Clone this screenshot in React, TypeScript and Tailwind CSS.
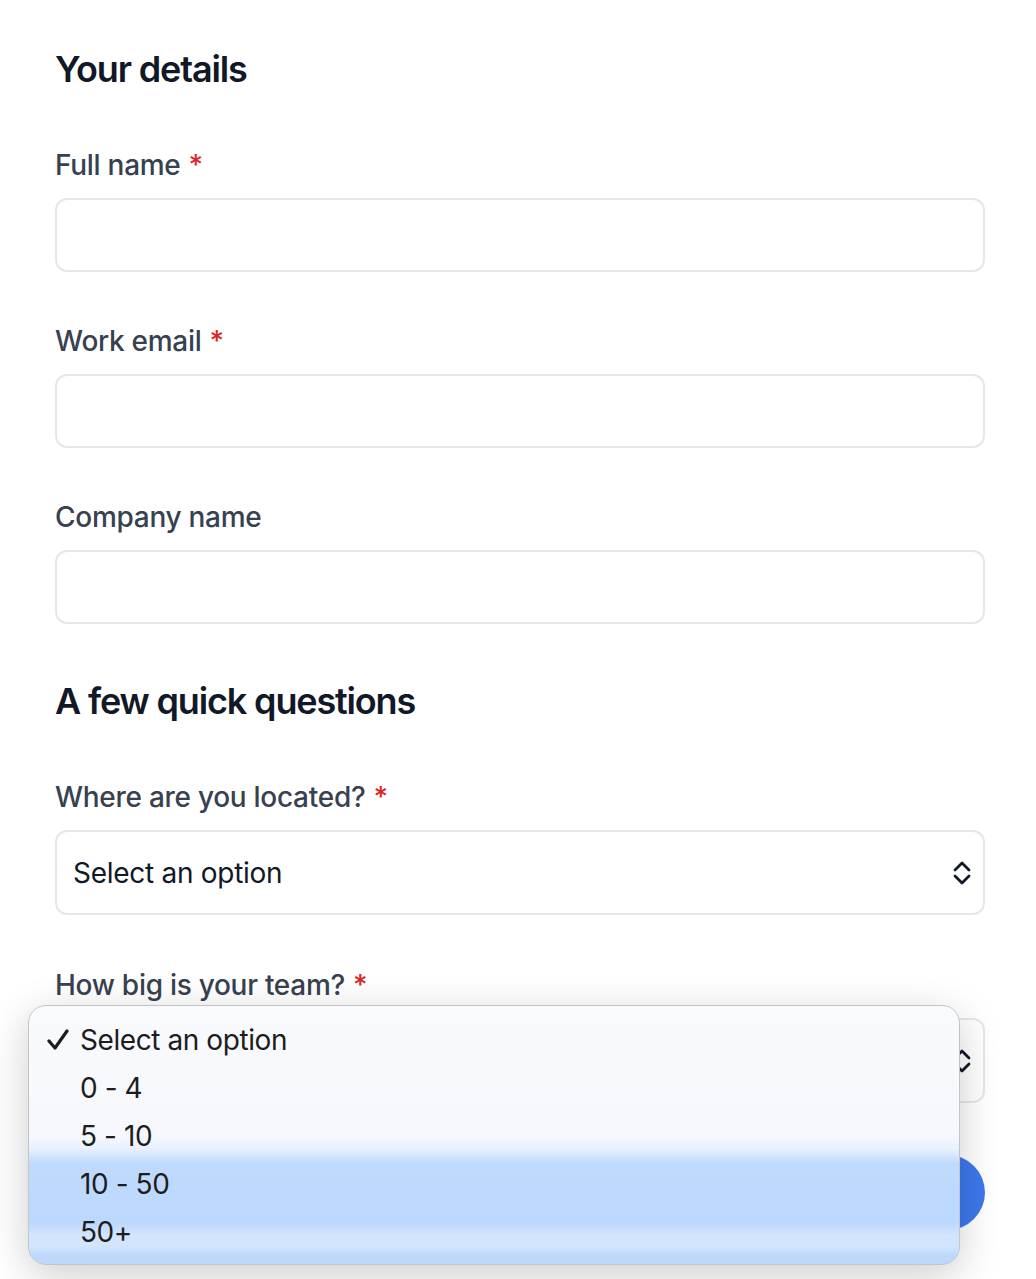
import React from "react";

type Field = {
  label: string;
  required?: boolean;
};

const detailFields: Field[] = [
  { label: "Full name", required: true },
  { label: "Work email", required: true },
  { label: "Company name" },
];

const teamSizes = ["Select an option", "0 - 4", "5 - 10", "10 - 50", "50+"];

const Label: React.FC<Field> = ({ label, required }) => (
  <label className="block text-[28px] leading-[40px] font-medium text-[#374151] tracking-[-0.01em]">
    {label}
    {required && <span className="ml-[8px] text-[#dc2626]">*</span>}
  </label>
);

const Chevrons: React.FC = () => (
  <svg width="18" height="24" viewBox="0 0 18 24" fill="none" stroke="#111827" strokeWidth="2.8" strokeLinecap="round" strokeLinejoin="round">
    <path d="M2 9 L9 2 L16 9" />
    <path d="M2 15 L9 22 L16 15" />
  </svg>
);

const SelectBox: React.FC = () => (
  <div className="mt-[13px] h-[85px] rounded-xl border-2 border-[#e5e7eb] bg-white pl-[16px] pr-[12px] flex items-center justify-between">
    <span className="text-[28px] text-[#111827] tracking-[-0.01em]">Select an option</span>
    <Chevrons />
  </div>
);

const App: React.FC = () => {
  return (
    <div
      className="relative min-h-[1279px] w-[1036px] bg-white overflow-hidden"
      style={{ fontFamily: "Inter, 'Noto Sans', sans-serif" }}
    >
      <div className="px-[55px] pt-[49px] w-[1040px]">
        <h2 className="text-[36px] leading-[40px] font-semibold text-[#111827] tracking-[-0.032em]">
          Your details
        </h2>

        {detailFields.map((field, i) => (
          <div key={field.label} className={i === 0 ? "mt-[56px]" : "mt-[49px]"}>
            <Label {...field} />
            <div className="mt-[13px] h-[74px] rounded-xl border-2 border-[#e5e7eb] bg-white" />
          </div>
        ))}

        <h2 className="mt-[57px] text-[36px] leading-[40px] font-semibold text-[#111827] tracking-[-0.032em]">
          A few quick questions
        </h2>

        <div className="mt-[56px]">
          <Label label="Where are you located?" required />
          <SelectBox />
        </div>

        <div className="mt-[50px]">
          <Label label="How big is your team?" required />
          <SelectBox />
        </div>

        <button className="mt-[52px] h-[75px] w-[930px] rounded-full bg-[#3e78ec] text-[28px] font-semibold text-white">
          Continue
        </button>
      </div>

      {/* native select popup, open over the team size field */}
      <div
        className="absolute left-[28px] top-[1005px] w-[932px] h-[260px] rounded-[18px] border border-[#c4c4c6] py-[10px] pl-[18px] shadow-[0_10px_40px_rgba(0,0,0,0.2)] bg-[linear-gradient(to_bottom,#f8fafd_0%,#f6f8fd_50%,#eaf2fe_55%,#bfdafd_61%,#bcd8fd_84%,#d3e5fd_89%,#d3e5fd_93%,#bcd8fc_97%)]"
      >
        {teamSizes.map((opt, i) => (
          <div key={opt} className="h-[48px] flex items-center text-[28px] leading-[48px] text-[#1d1d1f] tracking-[-0.015em]">
            <span className="w-[33px] flex items-center">
              {i === 0 && (
                <svg width="22" height="22" viewBox="0 0 22 22" fill="none" stroke="#1d1d1f" strokeWidth="3.2" strokeLinecap="round" strokeLinejoin="round">
                  <path d="M2 12 L8 19 L20 2" />
                </svg>
              )}
            </span>
            <span>{opt}</span>
          </div>
        ))}
      </div>
    </div>
  );
};

export default App;
